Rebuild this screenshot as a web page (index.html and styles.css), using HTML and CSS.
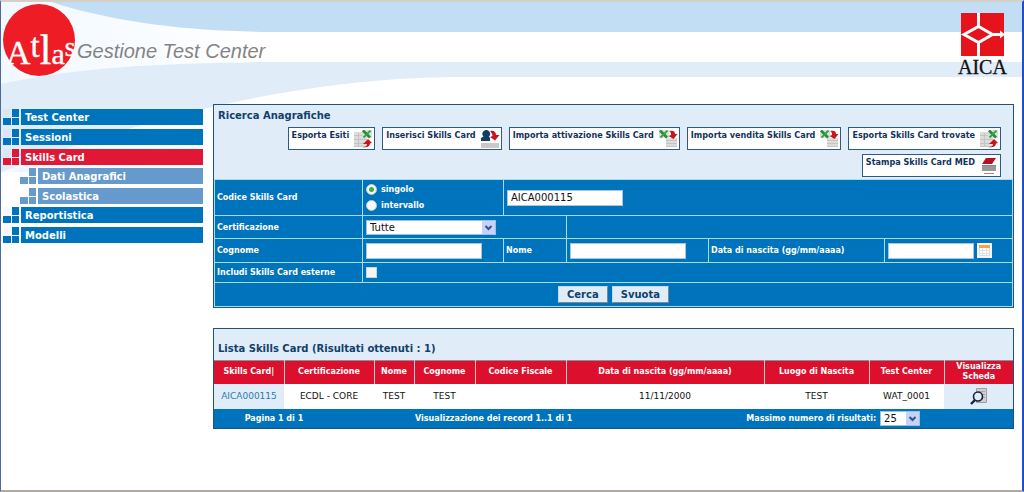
FILE: index.html
```html
<!DOCTYPE html>
<html lang="it">
<head>
<meta charset="utf-8">
<title>Atlas - Gestione Test Center</title>
<link rel="stylesheet" href="styles.css">
</head>
<body>
<svg class="defs" width="0" height="0" aria-hidden="true">
  <defs>
    <symbol id="steps" viewBox="0 0 17 16"><path d="M0 9h8v7H0zM9 9h7v7H9z"/><path d="M9 0h7v8H9z"/><path d="M0 0h8v8H0z" opacity=".04"/></symbol>
    <symbol id="sheet" viewBox="0 0 20 18"><path fill="#dcdcdc" d="M1 2h13v15H1z"/><path stroke="#c4c4c4" fill="none" d="M1 5.500h13M1 9.500h13M1 13.500h13M1 16.500h13M5.500 3v14"/></symbol>
    <symbol id="xls" viewBox="0 0 10 9"><path fill="#cfe6cf" d="M0 0h10v8H0z"/><path stroke="#2e8540" stroke-width="2.600" d="M1 .500l7 7"/><path stroke="#3f9a4c" stroke-width="1.800" d="M8.500 .500l-7 7"/></symbol>
    <symbol id="export" viewBox="0 0 20 18"><use href="#sheet" width="20" height="18"/><use href="#xls" x="9" width="10" height="9"/><path fill="#c4161c" d="M9 17c4 0 5-1 5-3h-4l5-5 4 4-2 .500c0 3-3 4.500-8 3.500z"/></symbol>
    <symbol id="import" viewBox="0 0 20 18"><path fill="#dcdcdc" d="M8 8h11v9H8z"/><path stroke="#c4c4c4" fill="none" d="M8 10.500h11M8 13.500h11M8 16.500h11"/><use href="#xls" x="1" width="10" height="9"/><path fill="#c4161c" d="M11 1c4-1 6 0 6 3l2.500 0-4 5-5-3 2.500-1c0-2 0-3-2-4z"/></symbol>
    <symbol id="insert" viewBox="0 0 20 18"><path fill="#143a66" d="M6 0a3.800 3.800 0 0 1 3 6.500l1 1.500v3H1V8l2.500-1.500A3.800 3.800 0 0 1 6 0z"/><path fill="#c4161c" d="M10 1c4-1 6 1 6 4h3.500l-4.500 5.500L10 7l2.500-1c0-2-1-3-2.500-5z"/><path fill="#c9c9c9" d="M1 13h18v5H1z"/></symbol>
    <symbol id="print" viewBox="0 0 20 18"><path fill="#b5121b" d="M7 1h10l-4 6H3z"/><path fill="#999" d="M3 8h14v6H3z"/><path stroke="#888" d="M3 8.500h14"/><path stroke="#c97878" d="M5 16.500h10"/></symbol>
    <symbol id="arrow" viewBox="0 0 13 13"><rect width="13" height="13" rx="1" fill="#c3d3fd"/><path d="M3.500 5l3 3 3-3" fill="none" stroke="#3d5185" stroke-width="2"/></symbol>
  </defs>
</svg>
<div class="page">
  <header class="header">
    <svg class="waves" width="500" height="172" viewBox="0 0 500 172" aria-hidden="true">
      <defs><linearGradient id="fade"><stop offset="0" stop-color="#f1f8ff"/><stop offset=".5" stop-color="#fff"/></linearGradient></defs>
      <path fill="url(#fade)" d="M0 2H500V172H0z"/>
      <path fill="#c1def4" d="M50 2C120 24 190 31 270 32H500V2z"/>
      <path fill="#e0ecf8" d="M0 84C80 66 170 63 270 62H500V77H450C300 79 150 115 0 172z"/>
    </svg>
    <div class="brand">
      <svg class="atlas" width="76" height="76" viewBox="0 0 76 76" role="img" aria-label="Atlas">
        <circle cx="38" cy="37" r="36" fill="#ee1c25"/>
        <text x="5" y="61" fill="#fff" stroke="#fff" stroke-width=".4" font-family="Liberation Serif, serif" font-size="34">A<tspan font-size="33" dy="-7">t</tspan><tspan font-size="42" dy="7">l</tspan><tspan font-size="30">a</tspan><tspan font-size="27" dy="-8">s</tspan></text>
      </svg>
      <span class="product">Gestione Test Center</span>
    </div>
    <svg class="aica" width="54" height="70" viewBox="0 0 54 70" role="img" aria-label="AICA">
      <path fill="#e5131b" d="M4 1h43v43H4z"/>
      <g fill="none" stroke="#fff" stroke-width="3"><path d="M21.500 1v13M21.500 31v13"/><path d="M7 22.500l14.500-8 14 8-14 8z"/><path d="M35 22.500h11"/></g>
      <path fill="#fff" d="M43 18.500l5 4-5 4z"/>
      <text x="1" y="62" font-family="Liberation Serif, serif" font-size="20" fill="#111" stroke="#111" stroke-width=".3">AICA</text>
    </svg>
  </header>
  <div class="body">
    <nav class="nav">
      <ul>
        <li><a class="item" href="#"><svg><use href="#steps"/></svg><span>Test Center</span></a></li>
        <li><a class="item" href="#"><svg><use href="#steps"/></svg><span>Sessioni</span></a></li>
        <li><a class="item active" href="#"><svg><use href="#steps"/></svg><span>Skills Card</span></a>
          <ul class="submenu">
            <li><a class="item sub" href="#"><svg><use href="#steps"/></svg><span>Dati Anagrafici</span></a></li>
            <li><a class="item sub" href="#"><svg><use href="#steps"/></svg><span>Scolastica</span></a></li>
          </ul>
        </li>
        <li><a class="item" href="#"><svg><use href="#steps"/></svg><span>Reportistica</span></a></li>
        <li><a class="item" href="#"><svg><use href="#steps"/></svg><span>Modelli</span></a></li>
      </ul>
    </nav>
    <main class="main">
      <form class="panel">
        <h2 class="title">Ricerca Anagrafiche</h2>
        <div class="tools">
          <button type="button">Esporta Esiti<svg><use href="#export"/></svg></button>
          <button type="button">Inserisci Skills Card<svg><use href="#insert"/></svg></button>
          <button type="button">Importa attivazione Skills Card<svg><use href="#import"/></svg></button>
          <button type="button">Importa vendita Skills Card<svg><use href="#import"/></svg></button>
          <button type="button">Esporta Skills Card trovate<svg><use href="#export"/></svg></button>
          <button type="button">Stampa Skills Card MED<svg><use href="#print"/></svg></button>
        </div>
        <table class="search">
          <colgroup><col class="c-label"><col class="c-field"><col class="c-name"><col class="c-input"><col class="c-date"><col></colgroup>
          <tr class="r-code">
            <th><label for="code">Codice Skills Card</label></th>
            <td><div class="radios"><label><input type="radio" name="mode" checked>singolo</label><label><input type="radio" name="mode">intervallo</label></div></td>
            <td colspan="4"><input class="text" id="code" type="text" value="AICA000115"></td>
          </tr>
          <tr class="r-cert">
            <th><label for="cert">Certificazione</label></th>
            <td colspan="2"><span class="pick wide"><select id="cert"><option>Tutte</option></select><svg><use href="#arrow"/></svg></span></td>
            <td colspan="3"></td>
          </tr>
          <tr class="r-name">
            <th><label for="surname">Cognome</label></th>
            <td><input class="text" id="surname" type="text"></td>
            <th><label for="name">Nome</label></th>
            <td><input class="text" id="name" type="text"></td>
            <th><label for="birth">Data di nascita (gg/mm/aaaa)</label></th>
            <td><div class="date"><input class="text short" id="birth" type="text"><button class="cal" type="button" aria-label="Calendario"><svg width="15" height="15" viewBox="0 0 15 15"><path fill="#f3f6fb" d="M0 0h15v15H0z"/><path fill="#fff" stroke="#d5deeb" d="M2.500 2.500h10v10h-10z"/><path fill="#f2a541" d="M2 2h11v3H2z"/><path stroke="#dde4ee" d="M3 7.500h9M3 10.500h9M5.500 5v7M9.500 5v7"/></svg></button></div></td>
          </tr>
          <tr class="r-ext">
            <th><label for="ext">Includi Skills Card esterne</label></th>
            <td colspan="5"><input class="check" id="ext" type="checkbox"></td>
          </tr>
          <tr class="r-act"><td colspan="6"><div class="actions"><button type="submit">Cerca</button><button type="reset">Svuota</button></div></td></tr>
        </table>
      </form>
      <section class="panel">
        <h2 class="title list">Lista Skills Card (Risultati ottenuti : 1)</h2>
        <table class="results">
          <colgroup><col class="w-card"><col class="w-cert"><col class="w-name"><col class="w-sur"><col class="w-cf"><col><col class="w-place"><col class="w-tc"><col class="w-view"></colgroup>
          <thead><tr><th>Skills Card|</th><th>Certificazione</th><th>Nome</th><th>Cognome</th><th>Codice Fiscale</th><th>Data di nascita (gg/mm/aaaa)</th><th>Luogo di Nascita</th><th>Test Center</th><th>Visualizza Scheda</th></tr></thead>
          <tbody><tr><td class="tint"><a href="#">AICA000115</a></td><td>ECDL - CORE</td><td>TEST</td><td>TEST</td><td></td><td>11/11/2000</td><td>TEST</td><td>WAT_0001</td>
            <td class="tint"><a href="#" aria-label="Visualizza Scheda"><svg width="18" height="18" viewBox="0 0 18 18"><path fill="#d0d0d0" stroke="#a0a0a0" d="M6.500 1.500h10v14h-10z"/><path stroke="#a8a8a8" d="M8 4.500h7M8 7.500h7M8 10.500h7"/><circle cx="8" cy="9.500" r="4.500" fill="#dbeefb" stroke="#16233f" stroke-width="1.600"/><path stroke="#16233f" stroke-width="2.400" d="M5 13l-4 4"/></svg></a></td></tr></tbody>
        </table>
        <div class="pager">
          <span>Pagina 1 di 1</span>
          <span>Visualizzazione dei record 1..1 di 1</span>
          <div class="max"><label for="max">Massimo numero di risultati:</label><span class="pick"><select id="max"><option>25</option></select><svg><use href="#arrow"/></svg></span></div>
        </div>
      </section>
    </main>
  </div>
</div>
</body>
</html>
```
FILE: styles.css
```css
* { box-sizing: border-box; }
body { margin: 0; font-family: "DejaVu Sans", sans-serif; font-size: 9px; color: #111; background: #fff; }
ul { list-style: none; margin: 0; padding: 0; }
a { text-decoration: none; }
button, input, select { font-family: inherit; margin: 0; border-radius: 0; }
.defs { position: absolute; }

.page { min-height: 100vh; border: solid; border-width: 2px 2px 2px 1px; border-color: #d4d0c8 #1b4fd0 #aeaca0 #4a6a9c; }

.header {
  position: relative;
  display: flex;
  justify-content: space-between;
  align-items: flex-start;
  height: 102px;
  padding-right: 11px;
  background: linear-gradient(#c1def4 30px, #fff 30px 60px, #e0ecf8 60px 75px, #fff 75px);
}
.waves { position: absolute; left: 0; top: -2px; }
.brand { position: relative; display: flex; align-items: center; padding-top: 1px; }
.atlas { display: block; overflow: visible; }
.product { padding-top: 20px; font: italic 20px "Liberation Sans", Arial, sans-serif; color: #848484; }
.aica { margin-top: 10px; }

.body { position: relative; display: flex; align-items: flex-start; gap: 10px; padding-right: 8px; }
.nav { width: 202px; flex: none; padding: 5px 0 0 2px; }
.nav li + li { margin-top: 4px; }
.nav .submenu { margin: 3px 0 -1px 17px; }
.item { display: flex; gap: 1px; height: 16px; color: #0073bd; }
.item svg { width: 17px; height: 16px; flex: none; fill: currentColor; }
.item span { flex: 1; padding-left: 4px; background: currentColor; font-size: 10px; font-weight: bold; line-height: 18px; }
.item span::first-line { color: #fff; }
.active { color: #e01735; }
.sub { color: #6699cc; }

.main { flex: 1; min-width: 0; display: flex; flex-direction: column; gap: 20px; }
.panel { border: 1px solid #1f5478; background: #e0edf9; }
.title { margin: 0; padding: 0 4px; font-size: 10px; line-height: 22px; color: #11406a; }
.title.list { padding-top: 8px; line-height: 23px; }
.tools { display: flex; flex-wrap: wrap; justify-content: flex-end; gap: 4px 7px; padding: 0 12px 2px 0; }
.tools button {
  display: flex;
  align-items: flex-start;
  gap: 4px;
  height: 23px;
  padding: 1px 1px 0 3px;
  border: 1px solid #2f5b80;
  background: #fff;
  color: #12335f;
  font: bold 9px/12px "DejaVu Sans Condensed", Tahoma, sans-serif;
  white-space: nowrap;
}
.tools svg { width: 20px; height: 18px; margin-top: 1px; }

table { width: 100%; table-layout: fixed; border-collapse: collapse; }
.search { background: #0073bd; color: #fff; font-size: 8px; }
.search th, .search td { padding: 0 3px; border: 1px solid #a5dcf5; text-align: left; font-size: 8px; font-weight: bold; white-space: nowrap; }
.search th { padding-left: 2px; }
.c-label { width: 148px; }
.c-field { width: 141px; }
.c-name { width: 63px; }
.c-input { width: 142px; }
.c-date { width: 176px; }
.r-code { height: 36px; }
.r-cert { height: 23px; }
.r-name { height: 24px; }
.r-ext { height: 20px; }
.r-act { height: 24px; }
.text { display: block; width: 116px; height: 16px; padding: 0 3px; border: 1px solid #a8c6dc; background: #fff; font-size: 10px; color: #111; }
.short { width: 86px; }
.radios { display: grid; gap: 5px; }
.radios label { display: flex; align-items: center; gap: 4px; }
.radios input { appearance: none; width: 11px; height: 11px; border: 1px solid #b9c9d6; border-radius: 50%; background: #f8f8f4; }
.radios input:checked { background: radial-gradient(circle, #3fae3a 2px, #f8f8f4 3px); }
.check { appearance: none; display: block; width: 11px; height: 11px; border: 1px solid #c3d3df; background: #f4f4f0; }
.pick { position: relative; display: inline-block; vertical-align: middle; width: 40px; height: 15px; }
.wide { width: 130px; }
.pick select { appearance: none; display: block; width: 100%; height: 15px; padding: 0 3px; border: 1px solid #9fc0dc; background: #fff; color: #111; font-size: 10px; line-height: 13px; }
.pick svg { position: absolute; right: 1px; top: 1px; width: 13px; height: 13px; pointer-events: none; }
.date { display: flex; align-items: center; gap: 3px; }
.cal { padding: 0; border: 0; background: none; line-height: 0; }
.actions { display: flex; justify-content: center; gap: 4px; }
.actions button { height: 17px; padding: 0 8px; border: 1px outset #c8d8e4; background: #dfedf8; color: #12406a; font-size: 10px; font-weight: bold; line-height: 14px; }

.results { background: #fff; text-align: center; }
.results th { height: 23px; padding: 0; background: #dc0f2d; color: #fff; font-size: 8px; line-height: 10px; }
.results th + th { border-left: 1px solid #f7c4cc; }
.results thead { border-top: 1px solid #8b8f9a; }
.results td { height: 25px; padding: 0; font-size: 9px; }
.results .tint { background: #e0edf9; }
.results a { color: #2b7cab; }
.results td svg { display: block; margin: 0 auto; }
.w-card { width: 70px; }
.w-cert { width: 90px; }
.w-name { width: 40px; }
.w-sur { width: 61px; }
.w-cf { width: 91px; }
.w-place { width: 105px; }
.w-tc { width: 75px; }
.w-view { width: 69px; }
.pager { display: grid; grid-template-columns: 15fr 40fr 45fr; align-items: center; justify-items: center; height: 19px; background: #0073bd; color: #fff; font-size: 8px; font-weight: bold; }
.max { display: flex; align-items: center; gap: 4px; }
```
